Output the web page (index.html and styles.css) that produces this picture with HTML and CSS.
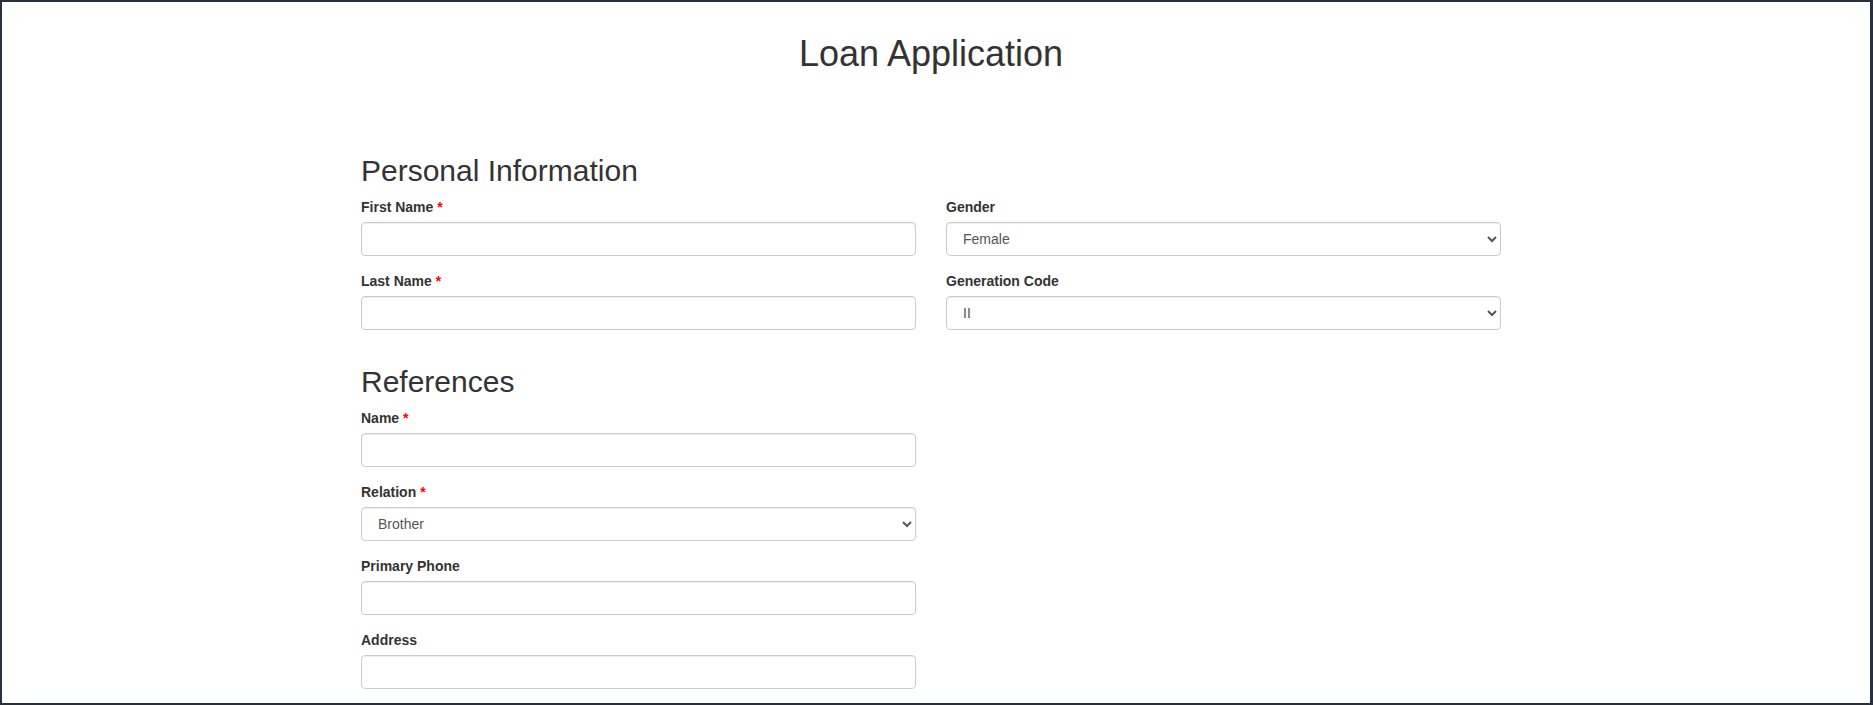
FILE: index.html
```html
<!DOCTYPE html>
<html lang="en">
<head>
    <meta charset="UTF-8">
    <meta name="viewport" content="width=device-width, initial-scale=1.0">
    <title>Loan Application</title>
    <link rel="stylesheet" href="styles.css">
</head>
<body>
    <div class="frame">
        <div class="container">
            <h1>Loan Application</h1>

            <!-- Personal information -->
            <h2>Personal Information</h2>
            <div class="row">
                <div class="col">
                    <div class="form-group">
                        <label for="firstName">First Name <span class="required">*</span></label>
                        <input type="text" id="firstName" class="form-control">
                    </div>
                    <div class="form-group">
                        <label for="lastName">Last Name <span class="required">*</span></label>
                        <input type="text" id="lastName" class="form-control">
                    </div>
                </div>
                <div class="col">
                    <div class="form-group">
                        <label for="gender">Gender</label>
                        <select id="gender" class="form-control">
                            <option>Male</option>
                            <option selected>Female</option>
                        </select>
                    </div>
                    <div class="form-group">
                        <label for="generationCode">Generation Code</label>
                        <select id="generationCode" class="form-control">
                            <option>Jr</option>
                            <option>Sr</option>
                            <option>I</option>
                            <option selected>II</option>
                            <option>III</option>
                        </select>
                    </div>
                </div>
            </div>

            <!-- References -->
            <h2>References</h2>
            <div class="row">
                <div class="col">
                    <div class="form-group">
                        <label for="refName">Name <span class="required">*</span></label>
                        <input type="text" id="refName" class="form-control">
                    </div>
                    <div class="form-group">
                        <label for="relation">Relation <span class="required">*</span></label>
                        <select id="relation" class="form-control">
                            <option selected>Brother</option>
                            <option>Sister</option>
                            <option>Father</option>
                            <option>Mother</option>
                            <option>Friend</option>
                        </select>
                    </div>
                    <div class="form-group">
                        <label for="primaryPhone">Primary Phone</label>
                        <input type="text" id="primaryPhone" class="form-control">
                    </div>
                    <div class="form-group">
                        <label for="address">Address</label>
                        <input type="text" id="address" class="form-control">
                    </div>
                </div>
            </div>
        </div>
    </div>
</body>
</html>
```

FILE: styles.css
```css
* {
    box-sizing: border-box;
}
html, body {
    margin: 0;
    padding: 0;
    background: #fff;
}
body {
    font-family: "Liberation Sans", Arial, Helvetica, sans-serif;
    font-size: 14px;
    line-height: 1.42857;
    color: #333;
}
.frame {
    height: 705px;
    overflow: hidden;
    border-style: solid;
    border-color: #27303f;
    border-width: 2px 3px 2px 2px;
    padding-right: 10px;
}
.container {
    width: 1140px;
    margin: 0 auto;
}
h1, h2 {
    font-weight: 400;
    line-height: 1.1;
    color: #333;
}
h1 {
    font-size: 36px;
    text-align: center;
    margin: 32px 0 80px;
}
h2 {
    font-size: 30px;
    margin: 20px 0 10px;
}
.row {
    display: grid;
    grid-template-columns: 1fr 1fr;
    column-gap: 30px;
}
.form-group {
    margin-bottom: 15px;
}
label {
    display: block;
    font-weight: bold;
    padding-top: 1px;
    margin-bottom: 4px;
}
.required {
    color: #f00;
}
.form-control {
    display: block;
    width: 100%;
    height: 34px;
    padding: 6px 12px;
    font-family: inherit;
    font-size: 14px;
    line-height: 1.42857;
    color: #555;
    background-color: #fff;
    border: 1px solid #ccc;
    border-radius: 4px;
    box-shadow: inset 0 1px 1px rgba(0, 0, 0, 0.075);
}
```
